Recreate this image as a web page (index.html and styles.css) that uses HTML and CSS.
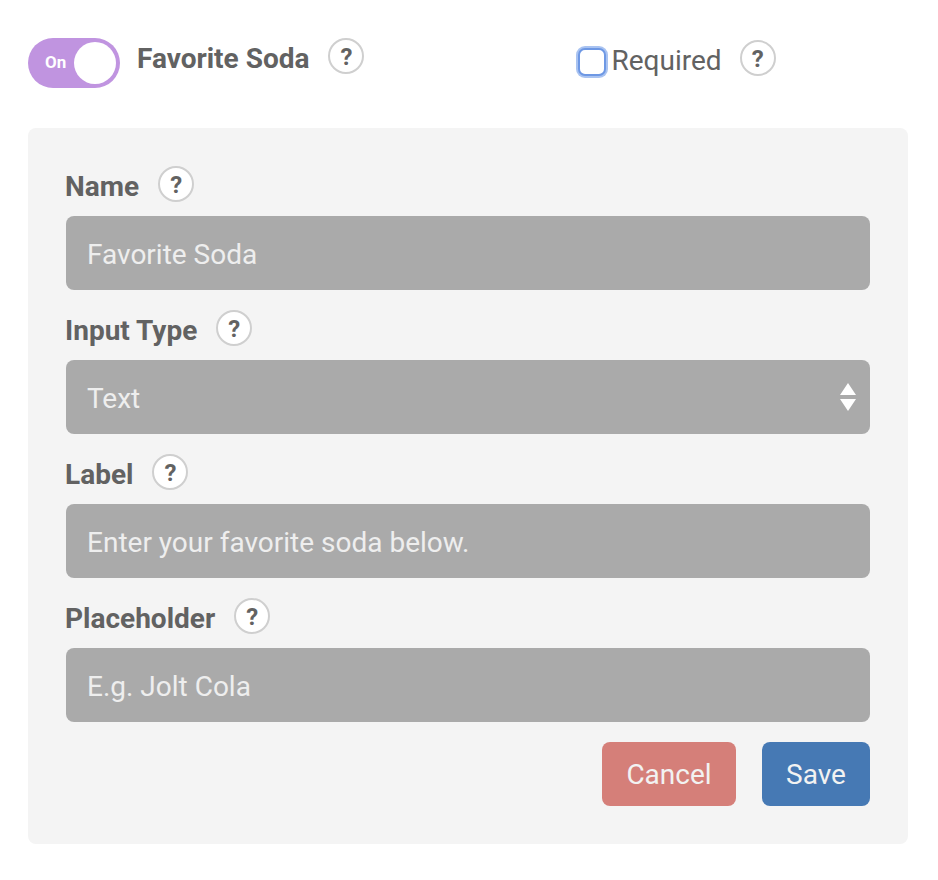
FILE: index.html
```html
<!DOCTYPE html>
<html lang="en">
<head>
<meta charset="utf-8">
<title>Favorite Soda</title>
<link rel="stylesheet" href="styles.css">
</head>
<body>
<main class="page">
  <header class="top">
    <div class="toggle"><span class="toggle-text">On</span><span class="knob"></span></div>
    <h1 class="title">Favorite Soda</h1>
    <span class="help help-title">?</span>
    <span class="check"></span>
    <span class="required">Required</span>
    <span class="help help-required">?</span>
  </header>
  <form class="panel">
    <div class="label-row"><label class="label">Name</label><span class="help">?</span></div>
    <div class="field">Favorite Soda</div>
    <div class="label-row"><label class="label">Input Type</label><span class="help">?</span></div>
    <div class="field field-select">Text
      <svg class="arrows" width="16" height="28" viewBox="0 0 16 28"><path d="M8 0 L16 12 H0 Z M0 16 H16 L8 28 Z" fill="#fff"/></svg>
    </div>
    <div class="label-row"><label class="label">Label</label><span class="help">?</span></div>
    <div class="field">Enter your favorite soda below.</div>
    <div class="label-row"><label class="label">Placeholder</label><span class="help">?</span></div>
    <div class="field">E.g. Jolt Cola</div>
    <div class="actions">
      <button type="button" class="btn btn-cancel">Cancel</button>
      <button type="button" class="btn btn-save">Save</button>
    </div>
  </form>
</main>
</body>
</html>
```
FILE: styles.css
```css
* { box-sizing: border-box; }
html, body { margin: 0; background: #fff; }
body { font-family: Roboto, "Liberation Sans", sans-serif; color: #626262; }
.page { width: 938px; height: 880px; padding: 38px 30px 0 28px; }
.top { display: flex; align-items: flex-start; height: 50px; }
.toggle { width: 92px; height: 50px; border-radius: 25px; background: #c094e0; display: flex; align-items: center; justify-content: space-between; padding: 0 4px 0 17px; }
.toggle-text { color: #fff; font-size: 17px; font-weight: 700; margin-top: -3px; }
.knob { width: 42px; height: 42px; border-radius: 50%; background: #fff; }
.title { margin: 3px 0 0 17px; font-size: 28px; line-height: 36px; font-weight: 700; color: #626262; }
.help { flex: none; width: 36px; height: 36px; border: 2px solid #cfcfcf; border-radius: 50%; background: #fff; color: #626262; font-size: 24px; font-weight: 700; line-height: 34px; text-align: center; }
.help-title { margin: 0 0 0 19px; }
.check { width: 28px; height: 28px; margin: 10px 0 0 214px; border: 2px solid #6e98e4; border-radius: 7px; background: #fff; box-shadow: 0 0 0 2px #a9c3f1; flex: none; }
.required { margin: 5px 0 0 5px; font-size: 28px; line-height: 36px; color: #626262; }
.help-required { margin: 2px 0 0 18px; }
.panel { margin-top: 40px; width: 880px; height: 716px; padding: 38px 38px 0; background: #f4f4f4; border-radius: 8px; }
.label-row { display: flex; align-items: center; height: 50px; padding-bottom: 14px; }
.panel > .field + .label-row { margin-top: 20px; height: 50px; }
.label { font-size: 28px; font-weight: 700; line-height: 36px; margin: 6px 0 0 -1px; }
.label-row .help { margin-left: 19px; }
.field { position: relative; height: 74px; padding: 0 21px; background: #aaa; border-radius: 8px; color: #eee; font-size: 28px; line-height: 78px; }
.arrows { position: absolute; right: 14px; top: 23px; }
.actions { display: flex; justify-content: flex-end; gap: 26px; margin-top: 20px; }
.btn { height: 64px; border: 0; border-radius: 8px; font: 400 28px Roboto, "Liberation Sans", sans-serif; color: #f2f2f2; padding: 0; }
.btn-cancel { width: 134px; background: #d57f79; }
.btn-save { width: 108px; background: #4679b4; }
```
